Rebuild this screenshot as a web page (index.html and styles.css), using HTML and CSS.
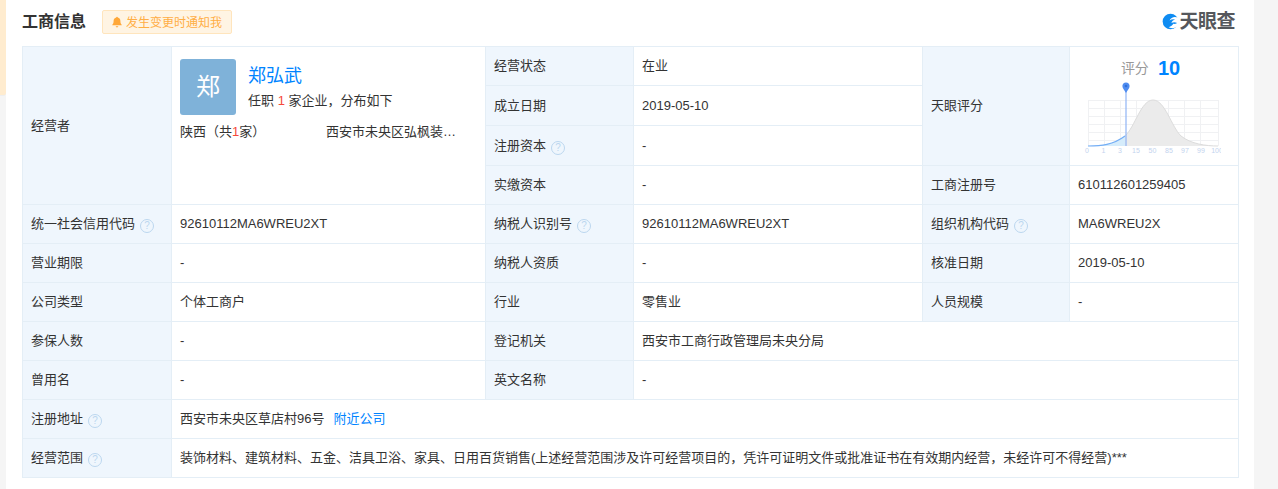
FILE: index.html
```html
<!DOCTYPE html>
<html lang="zh-CN">
<head>
<meta charset="utf-8">
<title>工商信息</title>
<link rel="stylesheet" href="styles.css">
</head>
<body>
<div class="page">
  <aside class="gutter"><div class="gutter-note"></div></aside>
  <main class="panel">
    <header class="head">
      <h2 class="title">工商信息</h2>
      <a class="notify">
        <svg class="bell" viewBox="0 0 12 12" width="12" height="12"><path d="M6 .8c.5 0 .8.3.8.8 1.7.4 2.6 1.700 2.600 3.400 0 1.700.4 2.800 1.300 3.700v.6H1.300v-.6c.9-.9 1.300-2 1.300-3.700 0-1.700.9-3 2.600-3.400 0-.5.3-.8.8-.8zM4.700 10.300h2.600C7.200 11 6.700 11.500 6 11.500s-1.200-.5-1.300-1.200z" fill="#ffa738"/></svg>
        发生变更时通知我
      </a>
      <div class="logo">
        <svg viewBox="0 0 18 18" width="17" height="17"><circle cx="9" cy="9" r="8.300" fill="#0f8cf2"/><path d="M17.500 5.500C14 3 9.500 4.500 8 8c2-1.500 4.500-1.800 6-.8-2 .2-3.600 1.500-4 3.300 1.800-1 4-1 6 0-1.200 1-2.700 1.300-4 1-.8 1.500-2.500 3-5 3.500 5 2.500 9.500.5 11-3V5.500z" fill="#fff"/></svg>
        <span class="logo-text">天眼查</span>
      </div>
    </header>
    <table class="info">
      <colgroup><col class="c1"><col class="c2"><col class="c3"><col class="c4"><col class="c5"><col class="c6"></colgroup>
      <tbody>
        <tr class="r-a">
          <th rowspan="4">经营者</th>
          <td rowspan="4" class="boss">
            <div class="boss-top">
              <div class="avatar">郑</div>
              <div class="boss-info">
                <a class="boss-name">郑弘武</a>
                <div class="boss-desc">任职 <em>1</em> 家企业，分布如下</div>
              </div>
            </div>
            <div class="boss-dist">
              <span class="prov">陕西（共<em>1</em>家）</span>
              <span class="comp">西安市未央区弘枫装…</span>
            </div>
          </td>
          <th>经营状态</th><td>在业</td>
          <th rowspan="3">天眼评分</th>
          <td rowspan="3" class="score">
            <div class="score-line"><span class="score-label">评分</span><span class="score-num">10</span></div>
            <svg class="chart" viewBox="0 0 140 72" width="140" height="72">
              <g stroke="#f0f1f3" stroke-width="1" fill="none">
                <path d="M7 19.500H138M7 27.500H138M7 35.500H138M7 43.500H138M7 51.500H138M7 59.500H138M7.500 19V65M23.500 19V65M39.500 19V65M55.500 19V65M71.500 19V65M87.500 19V65M103.500 19V65M119.500 19V65M137.500 19V65"/>
              </g>
              <path d="M7 65C20 65 32 64 44 55V65z" fill="#d5ecfb"/>
              <path d="M44 55C54 46 60 19 72 19S90 45 100 55C110 63 125 65 137 65H44z" fill="#ebebeb"/>
              <path d="M44 55C54 46 60 19 72 19S90 45 100 55C110 63 125 65 137 65" fill="none" stroke="#dcdcdc" stroke-width="1"/>
              <path d="M7 65C20 65 32 64 44 55" fill="none" stroke="#74aef5" stroke-width="1.200"/>
              <path d="M45 10V65" stroke="#8fb4f5" stroke-width="1.200"/>
              <path d="M45 1.500c2.200 0 3.600 1.600 3.600 3.500 0 2.300-2 4-3.600 7-1.600-3-3.600-4.700-3.600-7 0-1.900 1.400-3.500 3.600-3.500z" fill="#4f8cf0"/>
              <circle cx="45" cy="5" r="1.300" fill="#2f6fd8"/>
              <g class="ticks" fill="#c3d3ee" font-size="7" text-anchor="middle">
                <text x="6" y="72">0</text><text x="22.500" y="72">1</text><text x="39" y="72">3</text><text x="55" y="72">15</text><text x="71.500" y="72">50</text><text x="88" y="72">85</text><text x="104" y="72">97</text><text x="120" y="72">99</text><text x="136" y="72">100</text>
              </g>
            </svg>
          </td>
        </tr>
        <tr class="r-b"><th>成立日期</th><td>2019-05-10</td></tr>
        <tr class="r-c"><th>注册资本<i class="tip">?</i></th><td>-</td></tr>
        <tr class="r-d"><th>实缴资本</th><td>-</td><th>工商注册号</th><td>610112601259405</td></tr>
        <tr>
          <th>统一社会信用代码<i class="tip">?</i></th><td>92610112MA6WREU2XT</td>
          <th>纳税人识别号<i class="tip">?</i></th><td>92610112MA6WREU2XT</td>
          <th>组织机构代码<i class="tip">?</i></th><td>MA6WREU2X</td>
        </tr>
        <tr><th>营业期限</th><td>-</td><th>纳税人资质</th><td>-</td><th>核准日期</th><td>2019-05-10</td></tr>
        <tr><th>公司类型</th><td>个体工商户</td><th>行业</th><td>零售业</td><th>人员规模</th><td>-</td></tr>
        <tr><th>参保人数</th><td>-</td><th>登记机关</th><td colspan="3">西安市工商行政管理局未央分局</td></tr>
        <tr><th>曾用名</th><td>-</td><th>英文名称</th><td colspan="3">-</td></tr>
        <tr><th>注册地址<i class="tip">?</i></th><td colspan="5">西安市未央区草店村96号<a class="near">附近公司</a></td></tr>
        <tr><th>经营范围<i class="tip">?</i></th><td colspan="5">装饰材料、建筑材料、五金、洁具卫浴、家具、日用百货销售(上述经营范围涉及许可经营项目的，凭许可证明文件或批准证书在有效期内经营，未经许可不得经营)***</td></tr>
      </tbody>
    </table>
  </main>
  <aside class="side"></aside>
</div>
</body>
</html>
```
FILE: styles.css
```css
* { box-sizing: border-box; }
html, body { margin: 0; height: 100%; }
body {
  background: #f5f5f5;
  color: #333;
  font-family: "Liberation Sans", "Noto Sans CJK SC", sans-serif;
  font-size: 13px;
  overflow: hidden;
}
.page { display: flex; height: 489px; }
.gutter { width: 6px; flex: none; }
.gutter-note {
  height: 96px;
  background: #ffeccf;
  border-bottom-right-radius: 3px;
  border-bottom: 1px solid #eee;
}
.panel { width: 1248px; flex: none; background: #fff; padding: 0 16px; }
.side { flex: 1; }
.head { display: flex; align-items: center; height: 46px; padding-bottom: 3px; }
.title { margin: 0; font-size: 16px; font-weight: 700; color: #333; line-height: 24px; }
.notify {
  display: flex;
  align-items: center;
  gap: 3px;
  margin-left: 16px;
  height: 24px;
  width: 130px;
  padding-left: 8px;
  background: #fff4e3;
  border: 1px solid #ffe5bd;
  border-radius: 2px;
  color: #ffae45;
  font-size: 12px;
}
.logo { display: flex; align-items: center; margin-left: auto; margin-right: 3px; }
.logo-text { font-size: 19px; font-weight: 700; color: #55575c; line-height: 24px; letter-spacing: -.5px; }
.info {
  width: 1216px;
  table-layout: fixed;
  border-collapse: collapse;
  border: 1px solid #e4eef6;
}
.c1 { width: 149px; }
.c2 { width: 314px; }
.c3 { width: 148px; }
.c4 { width: 289px; }
.c5 { width: 147px; }
.c6 { width: 169px; }
tr { height: 39px; }
tr.r-a { height: 39px; }
tr.r-b, tr.r-c { height: 40px; }
tr.r-d { height: 39px; }
th, td {
  border: 1px solid #e4eef6;
  padding: 0 8px;
  font-weight: 400;
  font-size: 13px;
  line-height: 20px;
  text-align: left;
  vertical-align: middle;
  color: #333;
  overflow: hidden;
}
th { background: #eff6fd; }
em { font-style: normal; color: #f5483b; }
.tip {
  display: inline-block;
  width: 14px;
  height: 14px;
  margin-left: 5px;
  border: 1px solid #bcd7ef;
  border-radius: 50%;
  color: #bcd7ef;
  font-size: 10px;
  font-style: normal;
  line-height: 12px;
  text-align: center;
  vertical-align: -1px;
}
.boss { vertical-align: top; padding-top: 12px; }
.boss-top { display: flex; }
.avatar {
  width: 56px;
  height: 56px;
  flex: none;
  border-radius: 3px;
  background: #7fb2d9;
  color: #fff;
  font-size: 24px;
  line-height: 56px;
  text-align: center;
}
.boss-info { margin-left: 12px; }
.boss-name { display: block; color: #0084ff; font-size: 18px; line-height: 24px; margin-top: 5px; }
.boss-desc { line-height: 20px; margin-top: 3px; }
.boss-dist { display: flex; margin-top: 7px; line-height: 20px; }
.prov { width: 146px; flex: none; }
.comp { white-space: nowrap; }
.score { padding: 0; text-align: center; vertical-align: top; }
.score-line { display: flex; justify-content: center; align-items: center; gap: 9px; height: 26px; margin-top: 8px; padding-right: 7px; }
.score-label { color: #999; font-size: 14px; }
.score-num { color: #0084ff; font-size: 20px; font-weight: 700; }
.chart { display: block; margin: 0 0 0 11px; }
.ticks { font-family: "Liberation Sans", sans-serif; }
.near { color: #0084ff; margin-left: 9px; }
```
